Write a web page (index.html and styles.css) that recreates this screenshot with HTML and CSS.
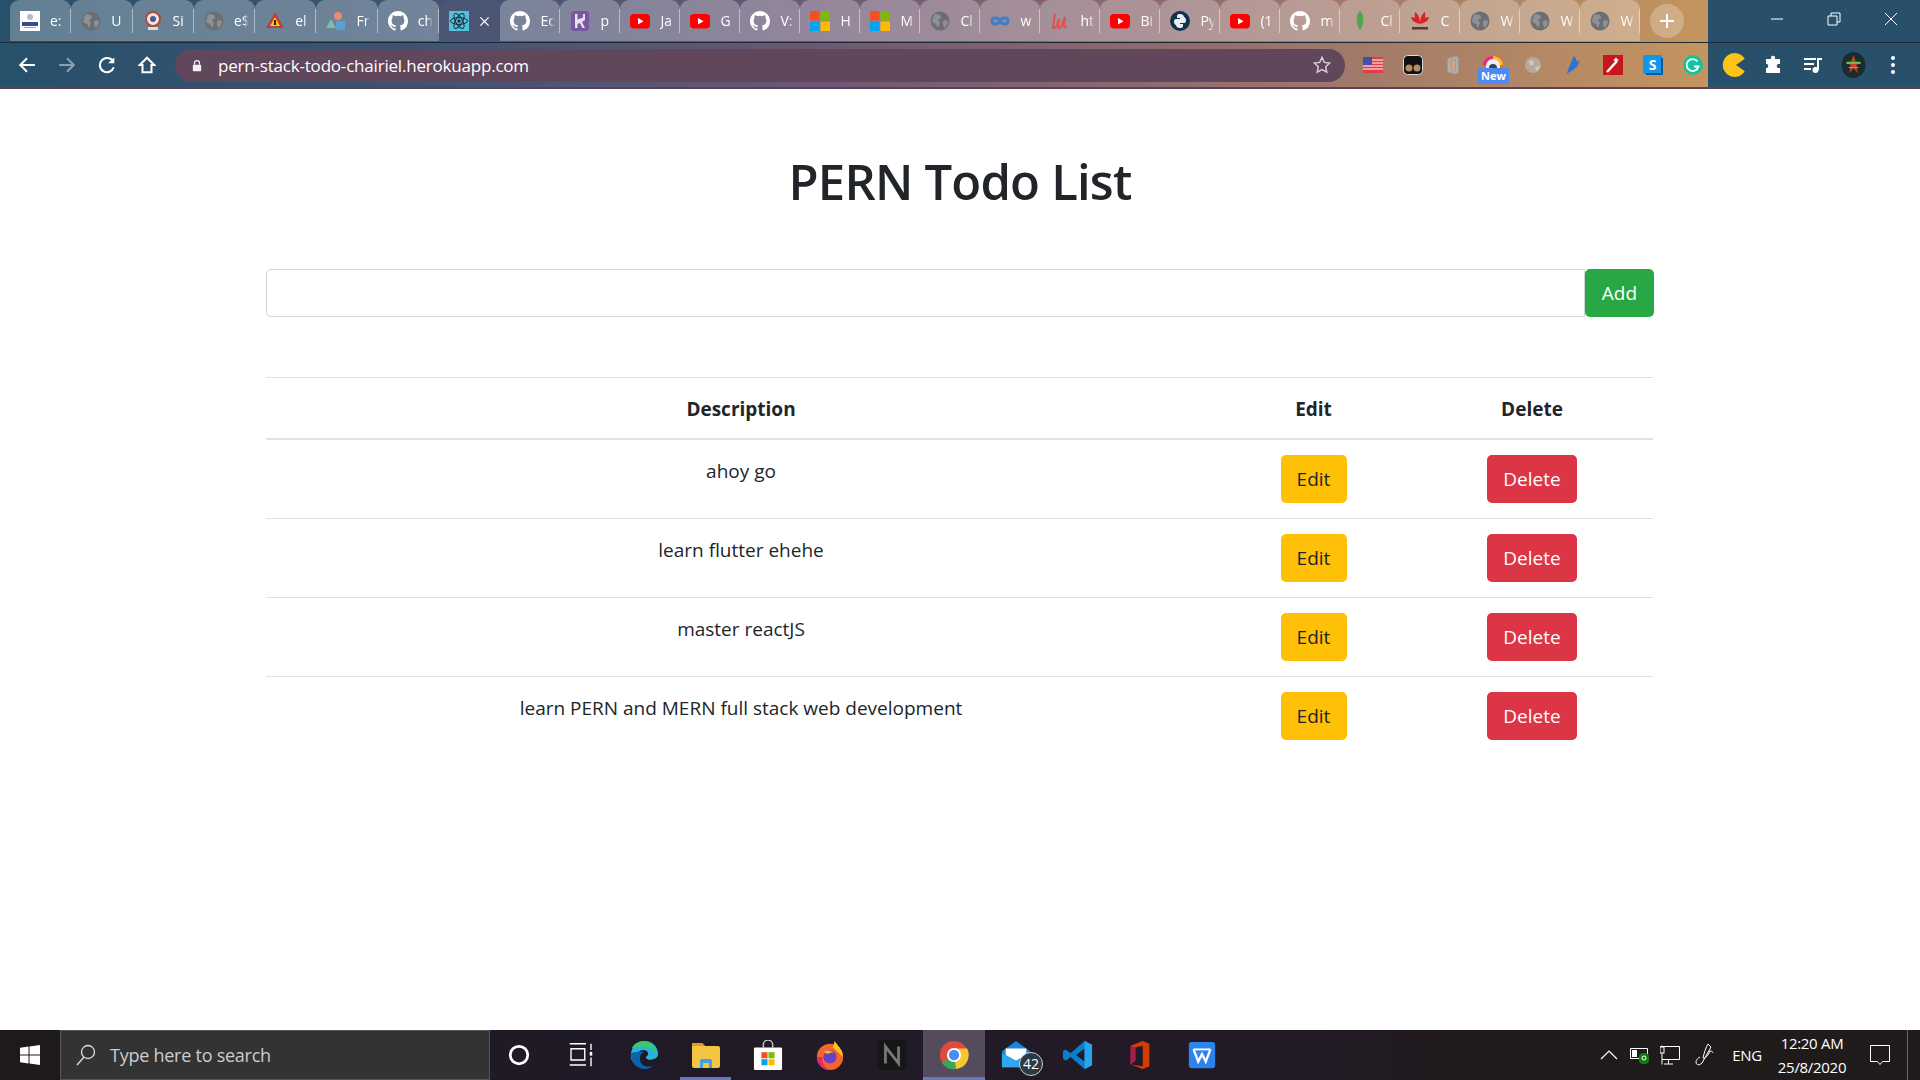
FILE: index.html
```html
<!DOCTYPE html>
<html lang="en">
<head>
   <meta charset="UTF-8">
   <title>PERN Todo List</title>
   <link rel="stylesheet" href="styles.css">
</head>
<body>
   <svg class="defs" width="0" height="0">
      <symbol id="globe" viewBox="0 0 20 20"><circle cx="10" cy="10" r="9.500" fill="#6b6f74"/><path d="M5 3l5 1 1 3-3 2 2 3-2 5-2-4-4-2 1-5zM13 10l4-1 1 3-3 5-2-3z" fill="#8f9094"/></symbol>
      <symbol id="github" viewBox="0 0 16 16"><path fill="#fff" d="M8 0C3.58 0 0 3.58 0 8c0 3.54 2.29 6.53 5.47 7.59.4.07.55-.17.55-.38v-1.34c-2.23.48-2.7-1.07-2.7-1.07-.36-.92-.89-1.17-.89-1.17-.73-.5.05-.49.05-.49.8.06 1.23.83 1.23.83.71 1.22 1.87.87 2.33.66.07-.52.28-.87.51-1.07-1.78-.2-3.64-.89-3.64-3.95 0-.87.31-1.59.82-2.15-.08-.2-.36-1.02.08-2.12 0 0 .67-.21 2.2.82a7.5 7.5 0 0 1 4 0c1.53-1.04 2.2-.82 2.2-.82.44 1.1.16 1.92.08 2.12.51.56.82 1.27.82 2.15 0 3.07-1.87 3.75-3.65 3.95.29.25.54.73.54 1.48v2.2c0 .21.15.46.55.38A8 8 0 0 0 16 8c0-4.42-3.58-8-8-8z"/></symbol>
      <symbol id="youtube" viewBox="0 0 20 20"><rect y="3" width="20" height="14.500" rx="4" fill="#f00"/><path d="M8 7l5.500 3.200L8 13.500z" fill="#fff"/></symbol>
      <symbol id="ms" viewBox="0 0 20 20"><path fill="#f25022" d="M0 0h9.500v9.500H0z"/><path fill="#7fba00" d="M10.500 0H20v9.500h-9.500z"/><path fill="#00a4ef" d="M0 10.500h9.500V20H0z"/><path fill="#ffb900" d="M10.500 10.500H20V20h-9.500z"/></symbol>
   </svg>

   <div class="tabstrip">
      <div class="tabs">
         <div class="tab tab-wide"><svg class="fav" viewBox="0 0 20 20"><rect width="20" height="20" fill="#fff"/><circle cx="10" cy="6" r="3" fill="#b4bad0"/><rect x="2" y="11" width="16" height="4" fill="#3a4a90"/><rect x="4" y="16" width="12" height="1" fill="#9aa3c0"/></svg><span class="tab-title">e:</span></div>
         <div class="tab tab-wide"><svg class="fav"><use href="#globe"/></svg><span class="tab-title">U</span></div>
         <div class="tab tab-wide"><svg class="fav" viewBox="0 0 20 20"><circle cx="10" cy="8" r="7" fill="#f0e6e0" stroke="#b5463c" stroke-width="2"/><circle cx="10" cy="8" r="3" fill="#4a5a8a"/><path d="M5 16h10v3H5z" fill="#e8d8c8"/></svg><span class="tab-title">Si</span></div>
         <div class="tab tab-wide"><svg class="fav"><use href="#globe"/></svg><span class="tab-title">e$</span></div>
         <div class="tab tab-wide"><svg class="fav" viewBox="0 0 20 20"><path d="M10 1l9 16H1z" fill="#c23c3c"/><path d="M10 6l5 9H5z" fill="#f5c518"/><path d="M9 9h2v5H9z" fill="#222"/></svg><span class="tab-title">el</span></div>
         <div class="tab tab-wide"><svg class="fav" viewBox="0 0 20 20"><circle cx="12" cy="5" r="4" fill="#e88a78"/><path d="M5 8l5 9H0z" fill="#7cc0a8"/><rect x="10" y="10" width="9" height="9" fill="#5d9fd0"/></svg><span class="tab-title">Fr</span></div>
         <div class="tab tab-wide"><svg class="fav"><use href="#github"/></svg><span class="tab-title">ch</span></div>
         <div class="tab tab-wide tab-active"><svg class="fav" viewBox="0 0 20 20"><rect width="20" height="20" fill="#53c1de"/><g fill="none" stroke="#1c2c3c" stroke-width="1"><ellipse cx="10" cy="10" rx="8.500" ry="3.400"/><ellipse cx="10" cy="10" rx="8.500" ry="3.400" transform="rotate(60 10 10)"/><ellipse cx="10" cy="10" rx="8.500" ry="3.400" transform="rotate(120 10 10)"/></g><circle cx="10" cy="10" r="1.700" fill="#1c2c3c"/></svg><svg class="tab-close" viewBox="0 0 12 12"><path d="M1.500 1.500l9 9M10.500 1.500l-9 9" stroke="#fff" stroke-width="1.500"/></svg></div>
         <div class="tab"><svg class="fav"><use href="#github"/></svg><span class="tab-title">Ec</span></div>
         <div class="tab"><svg class="fav" viewBox="0 0 20 20"><rect x="1" width="18" height="20" rx="3" fill="#79589f"/><path d="M5 3h2.500v5.500L13 6.500V3h2v6l-3 2 3 6h-2.500L10 12l-2.500 1v4H5z" fill="#e8e0f0"/></svg><span class="tab-title">p</span></div>
         <div class="tab"><svg class="fav"><use href="#youtube"/></svg><span class="tab-title">Ja</span></div>
         <div class="tab"><svg class="fav"><use href="#youtube"/></svg><span class="tab-title">G</span></div>
         <div class="tab"><svg class="fav"><use href="#github"/></svg><span class="tab-title">V:</span></div>
         <div class="tab"><svg class="fav"><use href="#ms"/></svg><span class="tab-title">H</span></div>
         <div class="tab"><svg class="fav"><use href="#ms"/></svg><span class="tab-title">M</span></div>
         <div class="tab"><svg class="fav"><use href="#globe"/></svg><span class="tab-title">Cl</span></div>
         <div class="tab"><svg class="fav" viewBox="0 0 20 20"><path d="M10 10c-2-4-8-4-8 0s6 4 8 0 8-4 8 0-6 4-8 0z" fill="none" stroke="#3f7fc8" stroke-width="3"/></svg><span class="tab-title">w</span></div>
         <div class="tab"><svg class="fav" viewBox="0 0 20 20"><path d="M5 3l-2 13c0 2 3 1 4-2l2-6-1 8c0 2 3 1 4-2l3-8-1 9c0 2 2 1 3 0" fill="none" stroke="#e2504c" stroke-width="2"/></svg><span class="tab-title">ht</span></div>
         <div class="tab"><svg class="fav"><use href="#youtube"/></svg><span class="tab-title">Bi</span></div>
         <div class="tab"><svg class="fav" viewBox="0 0 20 20"><circle cx="10" cy="10" r="10" fill="#10324a"/><path d="M10 3c-3 0-3 1-3 3v1h3v1H6c-2 0-2 2-2 3s1 3 2 3h1v-2c0-1 1-2 3-2h2c1 0 2-1 2-2V6c0-2-2-3-4-3z" fill="#e8eef2"/><path d="M10 17c3 0 3-1 3-3v-1h-3v-1h4c2 0 2-2 2-3s-1-3-2-3h-1v2c0 1-1 2-3 2H8c-1 0-2 1-2 2v2c0 2 2 3 4 3z" fill="#e8eef2"/></svg><span class="tab-title">Py</span></div>
         <div class="tab"><svg class="fav"><use href="#youtube"/></svg><span class="tab-title">(1</span></div>
         <div class="tab"><svg class="fav"><use href="#github"/></svg><span class="tab-title">m</span></div>
         <div class="tab"><svg class="fav" viewBox="0 0 20 20"><path d="M10 0c4 4 5 9 0 20C5 9 6 4 10 0z" fill="#4fa64a"/></svg><span class="tab-title">Cl</span></div>
         <div class="tab"><svg class="fav" viewBox="0 0 20 20"><path d="M10 13C6 11 4 7 5 1c3 2 5 6 5 12zM10 13c4-2 6-6 5-12-3 2-5 6-5 12zM10 13C7 12 2 11 1 6c4 0 7 3 9 7zM10 13c3-1 8-2 9-7-4 0-7 3-9 7z" fill="#d8222a"/><rect x="2" y="16" width="16" height="2.500" fill="#5a3838"/></svg><span class="tab-title">C</span></div>
         <div class="tab"><svg class="fav"><use href="#globe"/></svg><span class="tab-title">W</span></div>
         <div class="tab"><svg class="fav"><use href="#globe"/></svg><span class="tab-title">W</span></div>
         <div class="tab"><svg class="fav"><use href="#globe"/></svg><span class="tab-title">W</span></div>
      </div>
      <div class="new-tab"><svg width="16" height="16" viewBox="0 0 16 16"><path d="M8 1v14M1 8h14" stroke="#fff" stroke-width="2"/></svg></div>
      <div class="window-btns">
         <svg class="window-btn" viewBox="0 0 14 14"><path d="M1 7h12" stroke="#fff"/></svg>
         <svg class="window-btn" viewBox="0 0 14 14"><path d="M1 4h9v9H1zM4 4V1h9v9h-3" fill="none" stroke="#fff"/></svg>
         <svg class="window-btn" viewBox="0 0 14 14"><path d="M1 1l12 12M13 1L1 13" stroke="#fff"/></svg>
      </div>
   </div>

   <div class="toolbar">
      <div class="nav-btn"><svg viewBox="0 0 16 16"><path d="M15 8H2M8 2L2 8l6 6" fill="none" stroke="#fff" stroke-width="1.800"/></svg></div>
      <div class="nav-btn"><svg viewBox="0 0 16 16"><path d="M1 8h13M8 2l6 6-6 6" fill="none" stroke="#8fa0ac" stroke-width="1.800"/></svg></div>
      <div class="nav-btn"><svg viewBox="0 0 16 16"><path d="M13.500 5A6.300 6.300 0 1 0 14 10" fill="none" stroke="#fff" stroke-width="1.800"/><path d="M14.500 1v5.500H9z" fill="#fff"/></svg></div>
      <div class="nav-btn"><svg viewBox="0 0 16 16"><path d="M8 1.500L1.500 8H4v6.500h8V8h2.500z" fill="none" stroke="#fff" stroke-width="1.800"/></svg></div>
      <div class="address">
         <svg class="lock" viewBox="0 0 12 14"><path d="M3 6V4a3 3 0 0 1 6 0v2" fill="none" stroke="#f2eef2" stroke-width="1.500"/><rect x="1" y="6" width="10" height="8" rx="1" fill="#f2eef2"/></svg>
         <span class="url">pern-stack-todo-chairiel.herokuapp.com</span>
         <svg class="star" viewBox="0 0 20 20"><path d="M10 1.500l2.600 5.600 6 .7-4.500 4.100 1.200 6L10 15l-5.300 2.900 1.200-6L1.400 7.800l6-.7z" fill="none" stroke="#d8d0d8" stroke-width="1.600"/></svg>
      </div>
      <div class="extensions">
         <div class="ext"><svg viewBox="0 0 20 16"><rect width="20" height="16" fill="#e23c4a"/><path d="M0 3h20M0 6h20M0 9h20M0 12h20" stroke="#fff" stroke-width="1"/><rect width="9" height="8" fill="#4450a8"/></svg></div>
         <div class="ext"><svg viewBox="0 0 20 20"><rect x=".5" y=".5" width="19" height="19" rx="4" fill="#111" stroke="#ddd"/><circle cx="6" cy="13" r="3.500" fill="#b98a68"/><circle cx="14" cy="13" r="3.500" fill="#b98a68"/></svg></div>
         <div class="ext"><svg viewBox="0 0 20 24"><path d="M3 4l11-3 3 2v18l-4 2-10-2z" fill="#b8aca0" stroke="#8f8f8f"/><path d="M8 5h5v14H8z" fill="#c8a888" stroke="#9a9a9a"/></svg></div>
         <div class="ext ext-new"><svg viewBox="0 0 20 20"><path d="M0 18V7a10 7 0 0 1 20 0v11z" fill="#e8663c"/><path d="M0 10a10 9 0 0 1 10-9V10z" fill="#d8308c"/><path d="M10 1a10 9 0 0 1 10 9H10z" fill="#f8c030"/><path d="M3 18V11a7 7 0 0 1 14 0v7z" fill="#eee"/><circle cx="10" cy="13" r="4" fill="#345"/></svg><span class="new-badge">New</span></div>
         <div class="ext"><svg viewBox="0 0 20 20"><circle cx="10" cy="10" r="8" fill="#b8a898"/><path d="M5 6l5-1 1 4-3 2zM12 12l5-1-2 5-2-1z" fill="#d0c8c0"/></svg></div>
         <div class="ext"><svg viewBox="0 0 20 24"><path d="M2 23L11 1l3 4-1 2h6l-4 3h3l-4 4h2l-6 3h2l-7 4z" fill="#2a74d8"/></svg></div>
         <div class="ext"><svg viewBox="0 0 20 20"><rect width="20" height="20" fill="#c8161c"/><path d="M4 17L14 6" stroke="#fff" stroke-width="2.500"/><path d="M13 2l1 2 2 1-2 1-1 2-1-2-2-1 2-1z" fill="#fff"/></svg></div>
         <div class="ext"><svg viewBox="0 0 20 20"><rect width="19" height="19" rx="2" fill="#1296e8"/><path d="M19 3v16H3" fill="none" stroke="#0a5a9c" stroke-width="2"/><text x="9.500" y="14.500" class="ext-s">S</text></svg></div>
         <div class="ext"><svg viewBox="0 0 20 20"><circle cx="10" cy="10" r="10" fill="#15c39a"/><path d="M14.500 6.500a6 6 0 1 0 1 5H11" fill="none" stroke="#fff" stroke-width="1.800"/></svg></div>
         <div class="ext ext-big"><svg viewBox="0 0 20 20"><path d="M19 5a9.500 9.500 0 1 0 0 10l-7-5z" fill="#fcc419"/></svg></div>
         <div class="ext"><svg viewBox="0 0 20 20"><path d="M8 2a2.200 2.200 0 0 1 4 0v2h5v5h-2a2.200 2.200 0 0 0 0 4h2v5H3v-5h1a2.200 2.200 0 0 0 0-4H3V4h5z" fill="#fff"/></svg></div>
         <div class="ext"><svg viewBox="0 0 20 20"><path d="M1 4h12M1 9h10M1 14h7" stroke="#fff" stroke-width="2"/><path d="M15 3v12" stroke="#fff" stroke-width="2"/><circle cx="12.500" cy="15" r="3" fill="#fff"/><path d="M15 3h4v2h-4z" fill="#fff"/></svg></div>
         <div class="ext ext-big"><svg viewBox="0 0 24 26"><ellipse cx="12" cy="13" rx="12" ry="13" fill="#1c2c2c"/><path d="M12 3l2 6 6 1-5 3 1 8-4-5-4 5 1-8-5-3 6-1z" fill="#c2452c"/><path d="M5 10h14v2H5zM7 15h10v1H7z" fill="#68c04a"/></svg></div>
         <div class="ext"><svg viewBox="0 0 20 20"><circle cx="10" cy="3" r="2" fill="#fff"/><circle cx="10" cy="10" r="2" fill="#fff"/><circle cx="10" cy="17" r="2" fill="#fff"/></svg></div>
      </div>
   </div>

   <main class="page">
      <h1 class="title">PERN Todo List</h1>
      <form class="todo-form">
         <input class="todo-input" type="text">
         <button class="btn btn-add" type="button">Add</button>
      </form>
      <table class="todo-table">
         <thead>
            <tr>
               <th class="col-desc">Description</th>
               <th class="col-edit">Edit</th>
               <th class="col-delete">Delete</th>
            </tr>
         </thead>
         <tbody>
            <tr>
               <td>ahoy go</td>
               <td><button class="btn btn-edit" type="button">Edit</button></td>
               <td><button class="btn btn-delete" type="button">Delete</button></td>
            </tr>
            <tr>
               <td>learn flutter ehehe</td>
               <td><button class="btn btn-edit" type="button">Edit</button></td>
               <td><button class="btn btn-delete" type="button">Delete</button></td>
            </tr>
            <tr>
               <td>master reactJS</td>
               <td><button class="btn btn-edit" type="button">Edit</button></td>
               <td><button class="btn btn-delete" type="button">Delete</button></td>
            </tr>
            <tr>
               <td>learn PERN and MERN full stack web development</td>
               <td><button class="btn btn-edit" type="button">Edit</button></td>
               <td><button class="btn btn-delete" type="button">Delete</button></td>
            </tr>
         </tbody>
      </table>
   </main>

   <footer class="taskbar">
      <div class="start"><svg width="20" height="20" viewBox="0 0 20 20"><path fill="#fff" d="M0 2.800l8.500-1.200v8H0zM9.500 1.400L20 0v9.600H9.500zM0 10.500h8.500v8L0 17.300zM9.500 10.500H20V20L9.500 18.600z"/></svg></div>
      <div class="search">
         <svg width="20" height="22" viewBox="0 0 20 22"><circle cx="12" cy="8" r="6.500" fill="none" stroke="#ddd" stroke-width="1.300"/><path d="M8 13l-7 8" stroke="#ddd" stroke-width="1.300"/></svg>
         <span class="search-text">Type here to search</span>
      </div>
      <div class="task task-cortana"><svg viewBox="0 0 24 24"><circle cx="12" cy="12" r="7" fill="none" stroke="#fff" stroke-width="2.200"/></svg></div>
      <div class="task task-view"><svg viewBox="0 0 24 24"><path d="M3 3h13M3 20h13M4 7h11v9H4zM20 3v5M20 14v7" fill="none" stroke="#fff" stroke-width="1.100"/><rect x="19" y="9.500" width="2" height="3" fill="#fff"/></svg></div>
      <div class="task"><svg viewBox="0 0 32 32"><path d="M2 15C3 6 10 1 17 1c8 0 14 6 14 14 0 4-4 6-8 6-3 0-5-1-5-3 2-1 3-3 2-5-2-3-7-3-10 0-3 4-2 10 2 14C6 26 1 22 2 15z" fill="#2ab3d8"/><path d="M2 15c0 9 6 16 15 16 3 0 6-1 8-3-5 1-12 0-13-6-1-3 0-8 4-9-6-1-13 0-14 2z" fill="#0c60b0"/><path d="M16 7c6 0 11 3 14 8-1-8-7-14-14-14C10 1 5 4 3 9c3-1 8-2 13-2z" fill="#3ec868"/></svg></div>
      <div class="task task-open"><svg viewBox="0 0 30 28"><path d="M1 4a2 2 0 0 1 2-2h8l3 3h13a2 2 0 0 1 2 2v18a2 2 0 0 1-2 2H3a2 2 0 0 1-2-2z" fill="#f4c542"/><path d="M1 2h10l3 3H1z" fill="#d8a018"/><path d="M9 27v-7a2 2 0 0 1 2-2h8a2 2 0 0 1 2 2v7h-3v-5h-6v5z" fill="#3f9fe0"/></svg></div>
      <div class="task"><svg viewBox="0 0 30 32"><path d="M10 8V5a5 5 0 0 1 10 0v3" fill="none" stroke="#ccc" stroke-width="1.500"/><rect y="8" width="30" height="24" rx="1" fill="#fff"/><path fill="#f25022" d="M8 13h6.500v6.500H8z"/><path fill="#7fba00" d="M15.500 13H22v6.500h-6.500z"/><path fill="#00a4ef" d="M8 20.500h6.500V27H8z"/><path fill="#ffb900" d="M15.500 20.500H22V27h-6.500z"/></svg></div>
      <div class="task"><svg viewBox="0 0 30 32"><circle cx="15" cy="18" r="14" fill="#f4642c"/><path d="M20 1c3 5 8 8 9 17L18 8z" fill="#ffc21e"/><path d="M1 18C1 26 8 32 15 32c-6-2-9-8-8-14z" fill="#e8256c"/><circle cx="15" cy="18" r="7" fill="#6a3fc8"/><path d="M8 13c4-3 9-2 11 1-3-1-5 0-6 1z" fill="#ffb01e"/></svg></div>
      <div class="task"><svg viewBox="0 0 30 32"><rect width="30" height="32" rx="4" fill="#161616"/><path d="M8 25V7l14 18V7" fill="none" stroke="#777" stroke-width="3"/></svg></div>
      <div class="task task-active"><svg viewBox="0 0 32 32"><circle cx="16" cy="16" r="15" fill="#e04a3c"/><path d="M16 16L3 24a15 15 0 0 0 15 7z" fill="#3ca55a"/><path d="M16 9h14a15 15 0 0 1-12 22z" fill="#f8c631"/><circle cx="16" cy="16" r="7.500" fill="#fff"/><circle cx="16" cy="16" r="5.500" fill="#4b8bf4"/></svg></div>
      <div class="task"><svg viewBox="0 0 32 32"><path d="M1 12L16 1l15 11v17H1z" fill="#1a86d8"/><path d="M5 9h22v7l-11 6-11-6z" fill="#fff"/><path d="M1 14l15 9 15-9v15H1z" fill="#30a8ee"/></svg><span class="mail-count">42</span></div>
      <div class="task"><svg viewBox="0 0 32 32"><path d="M23 1l8 4v22l-8 4L8 18l-5 4-3-2v-8l3-2 5 4zM23 9l-9 7 9 7z" fill="#0a7fcc"/><path d="M23 1l8 4v22l-8 4z" fill="#28a4ea"/></svg></div>
      <div class="task"><svg viewBox="0 0 28 32"><path d="M4 6L17 1l7 3v24l-7 3-13-5 13 2V6L9 8v14l-5 4z" fill="#d83b01"/><path d="M4 6l5 2v14l-5 4z" fill="#a02050"/></svg></div>
      <div class="task"><svg viewBox="0 0 28 32"><rect y="2" width="28" height="28" rx="3" fill="#2d83ee"/><path d="M5 10l5 13 4-8 4 8 5-13" fill="none" stroke="#fff" stroke-width="2.500"/><path d="M5 10h18" stroke="#fff" stroke-width="2"/></svg></div>
      <div class="tray">
         <div class="tray-item tray-chev"><svg width="18" height="10" viewBox="0 0 18 10"><path d="M1 9l8-8 8 8" fill="none" stroke="#fff" stroke-width="1.200"/></svg></div>
         <div class="tray-item tray-batt"><svg width="20" height="20" viewBox="0 0 20 20"><path d="M.5 3.500h17v10H.5z" fill="none" stroke="#fff"/><rect x="2" y="5" width="5" height="7" fill="#fff"/><rect x="9" y="8" width="10" height="11" rx="4" fill="#107c10"/><circle cx="14" cy="13" r="2" fill="none" stroke="#fff"/></svg></div>
         <div class="tray-item tray-net"><svg width="20" height="20" viewBox="0 0 20 20"><path d="M.5 1.500h19v13H2M4 19h9M8.500 15v4M2 .5v19" fill="none" stroke="#fff"/><rect y="2" width="4" height="6" fill="#221e22" stroke="#fff"/></svg></div>
         <div class="tray-item tray-pen"><svg width="22" height="24" viewBox="0 0 22 24"><path d="M15 1l3 3-9 16c-3 3-6 2-6-1 0-2 2-4 4-5M15 1c-2 3-4 9-5 14 2 1 3-1 5-3l2-4c2 0 3 1 3 2" fill="none" stroke="#fff"/></svg></div>
         <div class="tray-item tray-lang">ENG</div>
         <div class="tray-item tray-clock"><span>12:20 AM</span><span>25/8/2020</span></div>
         <div class="tray-item tray-notif"><svg width="20" height="22" viewBox="0 0 20 22"><path d="M.5 1.500h19v16h-7l-2.500 3-2.500-3h-7z" fill="none" stroke="#fff"/></svg></div>
         <div class="show-desktop"></div>
      </div>
   </footer>
</body>
</html>
```

FILE: styles.css
```css
* {
   margin: 0;
   padding: 0;
   box-sizing: border-box;
}

body {
   display: flex;
   flex-direction: column;
   height: 100vh;
   overflow: hidden;
   background-color: #fff;
   color: #212529;
   font-family: "Open Sans", "Noto Sans", sans-serif;
}

.defs {
   position: absolute;
}

/* Browser frame */
.tabstrip {
   display: flex;
   flex: none;
   height: 42px;
   padding-left: 10px;
   background: linear-gradient(to right, #27506a 0, #3a5472 400px, #6a5775 800px, #8d6a70 1150px, #c4955f 1708px, #29506a 1708px);
}

.tabs {
   display: flex;
}

.tab {
   display: flex;
   align-items: center;
   gap: 10px;
   width: 60px;
   height: 41px;
   padding-left: 10px;
   overflow: hidden;
   background-color: rgba(255, 255, 255, 0.28);
   border-radius: 9px 9px 0 0;
   position: relative;
}

.tab-wide {
   width: 61.3px;
}

.tab::after {
   content: "";
   position: absolute;
   top: 9px;
   right: 0;
   width: 1px;
   height: 24px;
   background-color: rgba(255, 255, 255, 0.45);
}

.tab-active {
   height: 42px;
   background-color: #4b5574;
}

.tab-active::after {
   display: none;
}

.fav {
   flex: none;
   width: 20px;
   height: 20px;
}

.tab-title {
   width: 15px;
   overflow: hidden;
   color: #fff;
   font-size: 14px;
   white-space: nowrap;
   -webkit-mask-image: linear-gradient(to right, #000 60%, transparent);
   mask-image: linear-gradient(to right, #000 60%, transparent);
}

.tab-close {
   flex: none;
   width: 11px;
   height: 11px;
}

.new-tab {
   display: flex;
   align-items: center;
   justify-content: center;
   flex: none;
   width: 34px;
   height: 34px;
   margin: 4px 0 0 10px;
   background-color: rgba(255, 255, 255, 0.25);
   border-radius: 50%;
}

.window-btns {
   display: flex;
   align-items: center;
   justify-content: space-between;
   margin-left: auto;
   width: 128px;
   height: 38px;
   margin-right: 22px;
}

.window-btn {
   width: 14px;
   height: 14px;
}

.toolbar {
   display: flex;
   align-items: center;
   flex: none;
   height: 47px;
   padding-left: 7px;
   border-top: 1px solid #1d2a34;
   border-bottom: 2px solid #5c4258;
   background: linear-gradient(to right, #27506a 0, #3a5472 400px, #6a5775 800px, #8d6a70 1150px, #c4955f 1708px, #29506a 1708px);
}

.nav-btn {
   display: flex;
   align-items: center;
   justify-content: center;
   width: 40px;
   height: 40px;
}

.nav-btn svg {
   width: 18px;
   height: 18px;
}

.address {
   display: flex;
   align-items: center;
   width: 1170px;
   height: 33px;
   margin-left: 8px;
   padding: 0 14px 0 17px;
   background-color: #60475c;
   border-radius: 17px;
}

.lock {
   width: 10px;
   height: 13px;
   margin-right: 16px;
}

.url {
   color: #fff;
   font-size: 17px;
   letter-spacing: -0.2px;
}

.star {
   width: 18px;
   height: 18px;
   margin-left: auto;
}

.extensions {
   display: flex;
   margin-left: 8px;
}

.ext {
   display: flex;
   align-items: center;
   justify-content: center;
   width: 40px;
   height: 40px;
   position: relative;
}

.ext svg {
   width: 20px;
   height: 20px;
}

.ext-big svg {
   width: 25px;
   height: 26px;
}

.ext-s {
   fill: #fff;
   font-size: 14px;
   font-weight: 700;
   text-anchor: middle;
}

.new-badge {
   position: absolute;
   top: 23px;
   left: 5px;
   padding: 0 3px;
   color: #fff;
   font-size: 11px;
   font-weight: 700;
   line-height: 16px;
   background-color: #4c8bf5;
   border-radius: 2px;
}

/* Page */
.page {
   flex: 1;
   padding: 60px 266px 0;
}

.title {
   font-size: 49px;
   font-weight: 600;
   line-height: 64px;
   margin-bottom: -4px;
   text-align: center;
   letter-spacing: -0.8px;
}

.todo-form {
   display: flex;
   margin-top: 60px;
}

.todo-input {
   flex: 1;
   height: 48px;
   border: 1px solid #ced4da;
   border-radius: 5px 0 0 5px;
}

.btn {
   height: 48px;
   padding: 0 10px;
   border: 1px solid transparent;
   border-radius: 5px;
   color: #fff;
   font-family: inherit;
   font-size: 19px;
}

.btn-add {
   width: 69px;
   background-color: #28a745;
   border-radius: 5px;
}

.btn-edit {
   width: 66px;
   background-color: #ffc107;
   color: #212529;
}

.btn-delete {
   width: 90px;
   background-color: #dc3545;
}

.todo-table {
   width: 1387px;
   margin-top: 60px;
   border-collapse: collapse;
   table-layout: fixed;
   font-size: 19px;
   text-align: center;
}

.todo-table th,
.todo-table td {
   padding: 15px;
   line-height: 30px;
   vertical-align: top;
   border-top: 1px solid #dee2e6;
}

.todo-table td:first-child {
   padding-top: 16px;
}

.todo-table th {
   padding-top: 16px;
   padding-bottom: 14px;
   font-weight: 700;
   border-bottom: 2px solid #dee2e6;
}

.todo-table tbody tr:first-child td {
   border-top: 0;
}

.col-desc {
   width: 950px;
}

.col-edit {
   width: 195px;
}

/* Taskbar */
.taskbar {
   display: flex;
   flex: none;
   height: 50px;
   background: linear-gradient(to right, #1e1a1a 0, #201a28 600px, #221a26 1300px, #1f1b1b 1500px);
   color: #fff;
}

.start {
   display: flex;
   align-items: center;
   justify-content: center;
   width: 60px;
}

.search {
   display: flex;
   align-items: center;
   gap: 14px;
   width: 430px;
   padding-left: 15px;
   background-color: #333;
   border: 1px solid #555;
}

.search-text {
   color: #ccc;
   font-size: 18px;
   letter-spacing: -0.25px;
}

.task {
   display: flex;
   align-items: center;
   justify-content: center;
   width: 62px;
   position: relative;
}

.task svg {
   width: 30px;
   height: 30px;
}

.task-cortana {
   width: 58px;
}

.task-view {
   width: 65px;
}

.task-open::after {
   content: "";
   position: absolute;
   left: 5px;
   right: 6px;
   bottom: 0;
   height: 3px;
   background-color: #6a78b8;
}

.task-active {
   background-color: #544b5c;
   box-shadow: inset 0 -3px 0 #6a78b8;
}

.mail-count {
   position: absolute;
   top: 22px;
   left: 34px;
   width: 24px;
   height: 24px;
   color: #fff;
   font-size: 14px;
   line-height: 21px;
   text-align: center;
   background-color: #2c3a44;
   border: 1px solid #ccc;
   border-radius: 50%;
}

.tray {
   display: flex;
   margin-left: auto;
}

.tray-item {
   display: flex;
   align-items: center;
   justify-content: center;
}

.tray-chev { width: 30px; }
.tray-batt { width: 31px; }
.tray-net { width: 30px; }
.tray-pen { width: 38px; }

.tray-lang {
   width: 48px;
   font-size: 15px;
   letter-spacing: -0.3px;
}

.tray-clock {
   flex-direction: column;
   width: 82px;
   font-size: 15px;
   line-height: 24px;
   letter-spacing: -0.3px;
}

.tray-notif {
   width: 54px;
}

.show-desktop {
   width: 13px;
   border-left: 1px solid #666;
}
```
